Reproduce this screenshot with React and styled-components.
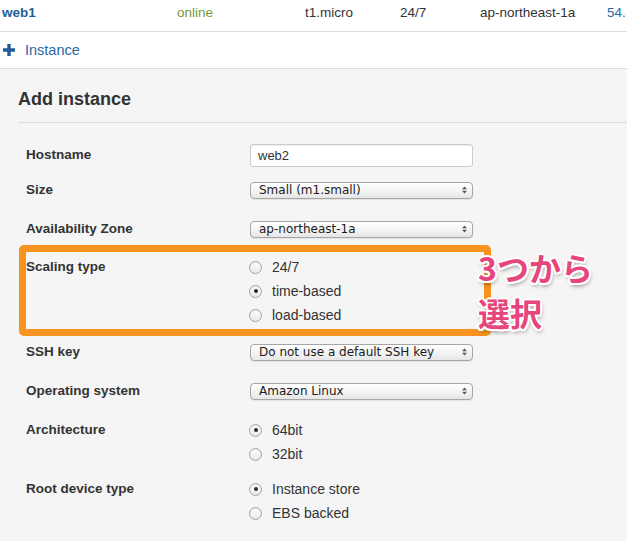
import styled, { createGlobalStyle } from "styled-components";

const GlobalStyle = createGlobalStyle`
  html, body {
    margin: 0;
    padding: 0;
    width: 627px;
    height: 541px;
    overflow: hidden;
    background: #f5f5f5;
    font-family: "Liberation Sans", Arial, sans-serif;
    color: #333;
  }
`;

const Page = styled.div`
  width: 627px;
  height: 541px;
  display: flex;
  flex-direction: column;
`;

const TopRow = styled.div`
  height: 32px;
  flex-shrink: 0;
  display: flex;
  align-items: flex-start;
  padding: 4px 0 0 2px;
  box-sizing: border-box;
  background: #fff;
  border-bottom: 1px solid #dedede;
  font-size: 13.5px;
  line-height: 17px;
  white-space: nowrap;
  overflow: hidden;
`;

const Cell = styled.div`
  width: ${(p) => p.$w}px;
  flex-shrink: 0;
  color: ${(p) => p.$color || "#333"};
  font-weight: ${(p) => (p.$bold ? 700 : 400)};
`;

const AddRow = styled.div`
  height: 36px;
  flex-shrink: 0;
  display: flex;
  align-items: center;
  gap: 10px;
  padding-left: 3px;
  background: #fff;
  border-bottom: 1px solid #dedede;
  font-size: 14.5px;
  color: #2a68a8;
`;

const Panel = styled.div`
  flex: 1;
  background: #f5f5f5;
  padding-left: 18px;
`;

const Heading = styled.h2`
  margin: 0;
  padding: 18px 0 11px;
  font-size: 18px;
  line-height: 24px;
  font-weight: 700;
  color: #333;
  border-bottom: 1px solid #dcdcdc;
`;

const Form = styled.div`
  padding: 20px 0 0 8px;
  display: flex;
  flex-direction: column;
`;

const Row = styled.div`
  position: relative;
  display: flex;
  align-items: flex-start;
  margin-top: ${(p) => p.$space || 0}px;
`;

const Label = styled.div`
  width: 224px;
  flex-shrink: 0;
  font-size: 13.5px;
  font-weight: 700;
  line-height: 24px;
  color: #333;
`;

const Controls = styled.div`
  display: flex;
  flex-direction: column;
`;

const Line = styled.div`
  height: 24px;
  display: flex;
  align-items: center;
`;

const TextInput = styled.input`
  width: 223px;
  height: 23px;
  box-sizing: border-box;
  padding: 0 7px;
  border: 1px solid #cccccc;
  border-radius: 3px;
  background: #fff;
  box-shadow: inset 0 1px 1px rgba(0, 0, 0, 0.075);
  font-family: "Liberation Sans", Arial, sans-serif;
  font-size: 13px;
  color: #333;
  outline: none;
`;

const SelectBox = styled.div`
  width: 223px;
  height: 17px;
  box-sizing: border-box;
  display: flex;
  align-items: center;
  justify-content: space-between;
  padding: 0 5px 0 8px;
  border: 1px solid #a6a6a6;
  border-radius: 4px;
  background: linear-gradient(180deg, #ffffff 0%, #f3f3f3 55%, #e6e6e6 100%);
  box-shadow: 0 1px 1px rgba(0, 0, 0, 0.08);
  font-family: "DejaVu Sans", Verdana, sans-serif;
  font-size: 12px;
  line-height: 15px;
  color: #1a1a1a;
`;

const RadioLine = styled.label`
  height: 24px;
  display: flex;
  align-items: center;
  font-size: 14px;
  color: #333;
`;

const RadioDot = styled.span`
  width: 13px;
  height: 13px;
  box-sizing: border-box;
  margin-left: -1px;
  margin-right: 10px;
  border-radius: 50%;
  border: 1px solid #a3a3a3;
  background: linear-gradient(180deg, #fefefe 0%, #e9e9e9 100%);
  box-shadow: inset 0 1px 1px rgba(0, 0, 0, 0.08);
  display: flex;
  align-items: center;
  justify-content: center;

  &::after {
    content: "";
    width: 4px;
    height: 4px;
    border-radius: 50%;
    background: ${(p) => (p.$checked ? "#2a2a2a" : "transparent")};
  }
`;

const Highlight = styled.div`
  position: absolute;
  top: -10px;
  left: -7px;
  width: 472px;
  height: 91px;
  box-sizing: border-box;
  border: 7px solid #f7931e;
  border-radius: 5px;
  pointer-events: none;
`;

const Note = styled.div`
  position: absolute;
  top: -10px;
  left: 452px;
  font-family: "Noto Sans CJK JP", sans-serif;
  font-size: 32px;
  font-weight: 700;
  line-height: 45px;
  color: #e6467b;
  white-space: nowrap;
  text-shadow: 2px 0 #fff, -2px 0 #fff, 0 2px #fff, 0 -2px #fff,
    1.5px 1.5px #fff, -1.5px -1.5px #fff, 1.5px -1.5px #fff,
    -1.5px 1.5px #fff, 1px 3px 4px rgba(0, 0, 0, 0.45);
`;

const PlusIcon = () => (
  <svg width="12" height="12" viewBox="0 0 12 12">
    <path d="M4.3 0h3.4v4.3H12v3.4H7.7V12H4.3V7.7H0V4.3h4.3z" fill="#1f5c99" />
  </svg>
);

const Arrows = () => (
  <svg width="5" height="8" viewBox="0 0 5 8">
    <path d="M0 3.2L2.5 0.5 5 3.2z M0 4.8L2.5 7.5 5 4.8z" fill="#555" />
  </svg>
);

const Select = ({ children }) => (
  <Line>
    <SelectBox>
      <span>{children}</span>
      <Arrows />
    </SelectBox>
  </Line>
);

const Radio = ({ checked, children }) => (
  <RadioLine>
    <RadioDot $checked={checked} />
    {children}
  </RadioLine>
);

export default function App() {
  return (
    <Page>
      <GlobalStyle />
      <TopRow>
        <Cell $w={175} $bold $color="#1f5c99">web1</Cell>
        <Cell $w={128} $color="#769a38">online</Cell>
        <Cell $w={95}>t1.micro</Cell>
        <Cell $w={80}>24/7</Cell>
        <Cell $w={127}>ap-northeast-1a</Cell>
        <Cell $w={20} $color="#2a68a8">54.</Cell>
      </TopRow>
      <AddRow>
        <PlusIcon />
        <span>Instance</span>
      </AddRow>
      <Panel>
        <Heading>Add instance</Heading>
        <Form>
          <Row>
            <Label>Hostname</Label>
            <Controls>
              <Line>
                <TextInput value="web2" readOnly />
              </Line>
            </Controls>
          </Row>
          <Row $space={11}>
            <Label>Size</Label>
            <Controls>
              <Select>Small (m1.small)</Select>
            </Controls>
          </Row>
          <Row $space={15}>
            <Label>Availability Zone</Label>
            <Controls>
              <Select>ap-northeast-1a</Select>
            </Controls>
          </Row>
          <Row $space={14}>
            <Highlight />
            <Label>Scaling type</Label>
            <Controls>
              <Radio>24/7</Radio>
              <Radio checked>time-based</Radio>
              <Radio>load-based</Radio>
            </Controls>
            <Note>
              3つから
              <br />
              選択
            </Note>
          </Row>
          <Row $space={13}>
            <Label>SSH key</Label>
            <Controls>
              <Select>Do not use a default SSH key</Select>
            </Controls>
          </Row>
          <Row $space={15}>
            <Label>Operating system</Label>
            <Controls>
              <Select>Amazon Linux</Select>
            </Controls>
          </Row>
          <Row $space={15}>
            <Label>Architecture</Label>
            <Controls>
              <Radio checked>64bit</Radio>
              <Radio>32bit</Radio>
            </Controls>
          </Row>
          <Row $space={11}>
            <Label>Root device type</Label>
            <Controls>
              <Radio checked>Instance store</Radio>
              <Radio>EBS backed</Radio>
            </Controls>
          </Row>
        </Form>
      </Panel>
    </Page>
  );
}
